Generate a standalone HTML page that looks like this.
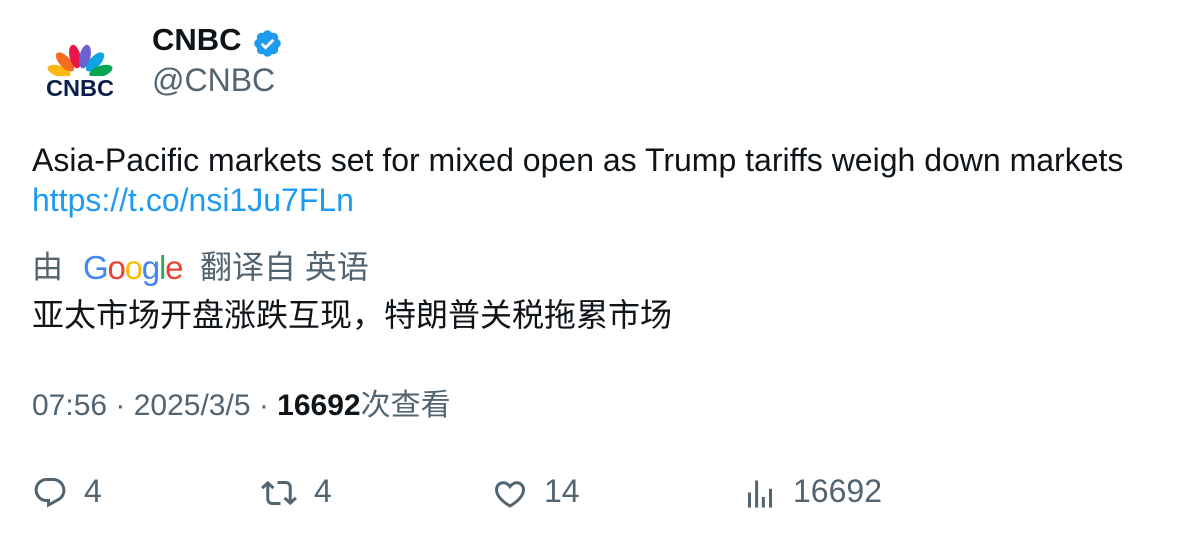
<!DOCTYPE html>
<html><head><meta charset="utf-8"><style>
body{margin:0;background:#fff;width:1196px;height:538px;overflow:hidden;font-family:"Liberation Sans","Noto Sans CJK SC",sans-serif;color:#0f1419}
.a{position:absolute;white-space:nowrap}
.g{color:#536471}
</style></head><body>
<svg class="a" style="left:44px;top:40px" width="72" height="60" viewBox="0 0 72 60">
<g transform="translate(36,38)">
<ellipse cx="0" cy="-22" rx="5.5" ry="12" fill="#fcb813" transform="rotate(-72)"/>
<ellipse cx="0" cy="-22" rx="5.5" ry="12" fill="#f36c21" transform="rotate(-43)"/>
<ellipse cx="0" cy="-22" rx="5.5" ry="12" fill="#e8174a" transform="rotate(-13)"/>
<ellipse cx="0" cy="-22" rx="5.5" ry="12" fill="#6c5fcf" transform="rotate(13)"/>
<ellipse cx="0" cy="-22" rx="5.5" ry="12" fill="#0da4e4" transform="rotate(43)"/>
<ellipse cx="0" cy="-22" rx="5.5" ry="12" fill="#06a54f" transform="rotate(72)"/>
<rect x="-30" y="-2" width="60" height="26" fill="#fff"/>
</g>
<text x="36" y="56" text-anchor="middle" font-family="Liberation Sans" font-weight="bold" font-size="23" textLength="68" lengthAdjust="spacingAndGlyphs" fill="#0b1f4b">CNBC</text>
</svg>
<div class="a" style="left:152px;top:22px;font-size:31px;font-weight:bold">CNBC</div>
<svg class="a" style="left:252px;top:28px" width="31" height="31" viewBox="0 0 24 24"><path fill="#1d9bf0" d="M22.25 12c0-1.43-.88-2.670-2.19-3.34.46-1.39.2-2.9-.81-3.910s-2.52-1.27-3.910-.81c-.66-1.31-1.91-2.19-3.34-2.19s-2.67.88-3.33 2.19c-1.4-.46-2.91-.2-3.92.81s-1.26 2.52-.8 3.91c-1.31.67-2.2 1.91-2.2 3.34s.89 2.67 2.2 3.34c-.46 1.39-.21 2.9.8 3.91s2.52 1.26 3.91.81c.67 1.31 1.91 2.19 3.34 2.19s2.68-.88 3.34-2.19c1.39.45 2.9.2 3.91-.81s1.27-2.52.81-3.91c1.31-.67 2.19-1.91 2.19-3.34z"/><path d="M7.5 12.2l3 3 6-6" stroke="#fff" stroke-width="2.2" fill="none"/></svg>
<div class="a g" style="left:152px;top:62px;font-size:32px">@CNBC</div>
<div class="a" style="left:32px;top:142px;font-size:32px">Asia-Pacific markets set for mixed open as Trump tariffs weigh down markets</div>
<div class="a" style="left:32px;top:182px;font-size:32px;color:#1d9bf0">https://t.co/nsi1Ju7FLn</div>
<div class="a g" style="left:32px;top:242px;font-size:31px">由</div>
<div class="a" style="left:83px;top:249px;font-size:33px;letter-spacing:-1.2px"><span style="color:#4285f4">G</span><span style="color:#ea4335">o</span><span style="color:#fbbc05">o</span><span style="color:#4285f4">g</span><span style="color:#34a853">l</span><span style="color:#ea4335">e</span></div>
<div class="a g" style="left:200px;top:242px;font-size:32px">翻译自 英语</div>
<div class="a" style="left:32px;top:290px;font-size:32px">亚太市场开盘涨跌互现，特朗普关税拖累市场</div>
<div class="a g" style="left:32px;top:380px;font-size:30px">07:56 · 2025/3/5 · <b style="color:#0f1419">16692</b>次查看</div>
<svg class="a" style="left:32px;top:475px" width="36" height="36" viewBox="0 0 24 24"><path fill="#536471" d="M1.751 10c0-4.42 3.584-8 8.005-8h4.366c4.49 0 8.129 3.64 8.129 8.13 0 2.960-1.607 5.68-4.196 7.11l-8.054 4.46v-3.69h-.067c-4.49.1-8.183-3.51-8.183-8.01zm8.005-6c-3.317 0-6.005 2.69-6.005 6 0 3.37 2.77 6.08 6.138 6.01l.351-.01h1.761v2.3l5.087-2.81c1.951-1.08 3.163-3.13 3.163-5.36 0-3.39-2.744-6.130-6.129-6.13H9.756z"/></svg>
<div class="a g" style="left:84px;top:473px;font-size:32px">4</div>
<svg class="a" style="left:261px;top:475px" width="36" height="36" viewBox="0 0 24 24"><path fill="#536471" d="M4.5 3.88l4.432 4.14-1.364 1.46L5.5 7.55V16c0 1.1.896 2 2 2H13v2H7.5c-2.209 0-4-1.790-4-4V7.55L1.432 9.48.068 8.02 4.5 3.88zM16.5 6H11V4h5.5c2.209 0 4 1.79 4 4v8.45l2.068-1.93 1.364 1.46-4.432 4.14-4.432-4.14 1.364-1.46 2.068 1.93V8c0-1.1-.896-2-2-2z"/></svg>
<div class="a g" style="left:314px;top:473px;font-size:32px">4</div>
<svg class="a" style="left:492px;top:476px" width="36" height="36" viewBox="0 0 24 24"><path fill="#536471" d="M16.697 5.5c-1.222-.06-2.679.51-3.89 2.16l-.805 1.09-.806-1.09C9.984 6.01 8.526 5.44 7.304 5.5c-1.243.07-2.349.78-2.91 1.910-.552 1.12-.633 2.78.479 4.82 1.074 1.97 3.257 4.27 7.129 6.61 3.87-2.34 6.052-4.64 7.126-6.61 1.111-2.04 1.030-3.7.477-4.820-.561-1.13-1.666-1.84-2.908-1.91zm4.187 7.69c-1.351 2.48-4.001 5.12-8.379 7.67l-.503.3-.504-.3c-4.379-2.55-7.029-5.19-8.382-7.67-1.36-2.5-1.41-4.86-.514-6.67.887-1.79 2.647-2.91 4.601-3.010 1.651-.09 3.368.56 4.798 2.01 1.429-1.45 3.146-2.1 4.796-2.01 1.954.1 3.714 1.22 4.601 3.010.896 1.81.846 4.17-.514 6.67z"/></svg>
<div class="a g" style="left:544px;top:473px;font-size:32px">14</div>
<svg class="a" style="left:742px;top:476px" width="36" height="36" viewBox="0 0 24 24"><path fill="#536471" d="M8.75 21V3h2v18h-2zM18 21V8.5h2V21h-2zM4 21l.004-10h2L6 21H4zm9.248 0v-7h2v7h-2z"/></svg>
<div class="a g" style="left:793px;top:473px;font-size:32px">16692</div>
</body></html>
